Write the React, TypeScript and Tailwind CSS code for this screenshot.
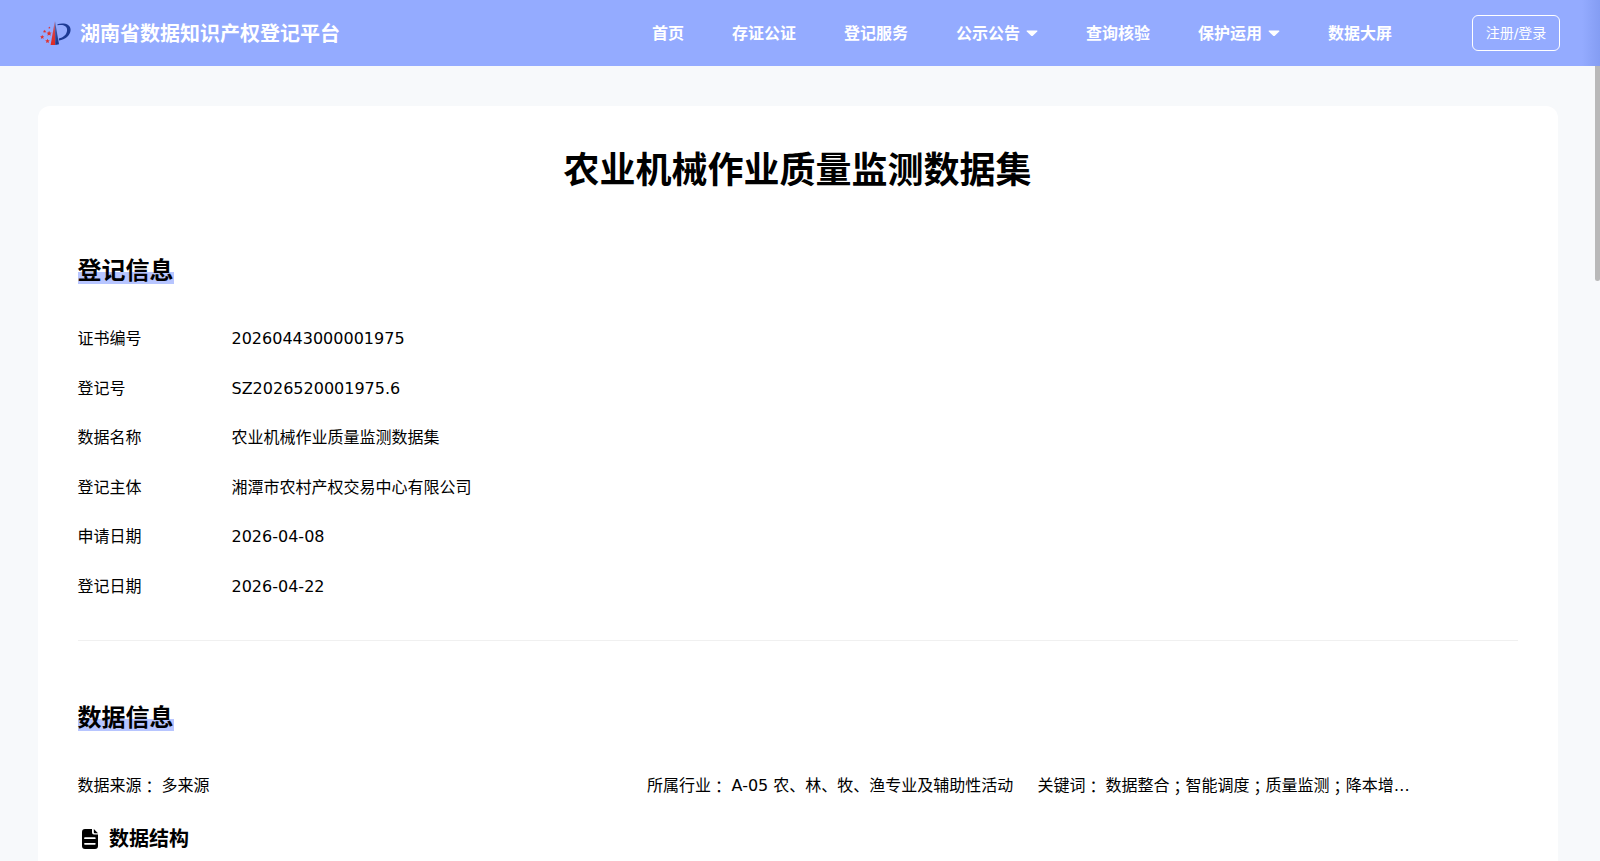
import React from "react";

const nav = [
  { label: "首页" },
  { label: "存证公证" },
  { label: "登记服务" },
  { label: "公示公告", menu: true },
  { label: "查询核验" },
  { label: "保护运用", menu: true },
  { label: "数据大屏" },
];

const rows = [
  ["证书编号", "20260443000001975"],
  ["登记号", "SZ2026520001975.6"],
  ["数据名称", "农业机械作业质量监测数据集"],
  ["登记主体", "湘潭市农村产权交易中心有限公司"],
  ["申请日期", "2026-04-08"],
  ["登记日期", "2026-04-22"],
];

const keywords = ["数据整合", "智能调度", "质量监测", "降本增…"];

const star = "M0-2.4L.7-.8 2.4-.7 1.1.4 1.5 2.1 0 1.2-1.5 2.1-1.1.4-2.4-.7-.7-.8Z";

function Logo() {
  return (
    <svg className="block h-[24px] w-[31px] shrink-0" viewBox="0 0 31 24">
      <defs>
        <linearGradient id="tower" x1="0" y1="0" x2="0" y2="1">
          <stop offset="0" stopColor="#a5708f" />
          <stop offset="0.55" stopColor="#d93a3c" />
          <stop offset="1" stopColor="#e02a20" />
        </linearGradient>
        <linearGradient id="spire" x1="0" y1="0" x2="0" y2="1">
          <stop offset="0" stopColor="#5564a8" />
          <stop offset="1" stopColor="#16368c" />
        </linearGradient>
      </defs>
      <path d="M14.8 0L15.3 23.9H10.6Z" fill="url(#tower)" />
      <path d="M15 .2L19 23.2 15.3 23.9Z" fill="url(#spire)" />
      <path
        d="M17.4 3.2C23 1.4 30.8 2.6 30.6 9C30.4 14.6 25.2 18.6 19 19.4L18.8 17.6C23.4 16.6 27 13.4 27.1 9C27.2 4.4 22.4 3.2 17.6 4.3Z"
        fill="#1d3a94"
      />
      <g fill="#e0302c">
        <path d={star} transform="translate(9.1 12.4) scale(1.1)" />
        <path d={star} transform="translate(7.5 20) scale(.95)" />
        <path d={star} transform="translate(2.2 16) scale(.9)" />
        <path d={star} transform="translate(4.6 10.4) scale(.7)" />
        <path d={star} transform="translate(9.4 6.6) scale(.5)" />
      </g>
    </svg>
  );
}

function Caret() {
  return (
    <svg className="ml-[6px] h-[7px] w-[12px]" viewBox="0 0 12 7">
      <path d="M1.1.5H10.9Q12 .6 11.2 1.5L7.1 5.6Q6 6.6 4.9 5.6L.8 1.5Q0 .6 1.1.5Z" fill="#fff" />
    </svg>
  );
}

function Wide({ children }: { children: string }) {
  return <span className="font-['Noto_Sans_CJK_TC',sans-serif]">{children}</span>;
}

function SectionTitle({ children }: { children: string }) {
  return (
    <h2 className="flex h-[38px]">
      <span className="bg-[linear-gradient(#b7c5ff,#b7c5ff)] bg-[length:100%_12px] bg-[position:0_21px] bg-no-repeat text-2xl font-bold leading-[40px]">
        {children}
      </span>
    </h2>
  );
}

export default function App() {
  return (
    <div className="flex h-[861px] flex-col overflow-hidden bg-[#f7f9fb] font-['DejaVu_Sans','Noto_Sans_CJK_SC',sans-serif] text-black">
      <header className="flex h-[66px] shrink-0 items-center bg-[linear-gradient(to_right,#94abff_0,#94abff_1582px,#849df3_1600px)] pl-10 pr-10 text-white">
        <Logo />
        <span className="ml-[9px] w-[260px] whitespace-nowrap pt-px text-[20px] font-bold leading-[28px]">
          湖南省数据知识产权登记平台
        </span>
        <nav className="ml-auto mr-20 flex items-center gap-12 pt-px text-base font-bold">
          {nav.map((item) => (
            <a key={item.label} className="flex items-center whitespace-nowrap">
              {item.label}
              {item.menu && <Caret />}
            </a>
          ))}
        </nav>
        <button className="mb-px h-[36px] w-[88px] rounded-[6px] border border-white text-sm">注册/登录</button>
      </header>

      <div className="flex min-h-0 flex-1">
        <main className="min-h-0 flex-1 overflow-hidden pl-[37.5px] pr-[37.5px] pt-10">
          <div className="h-[900px] rounded-xl bg-white px-10 pt-[41px]">
            <h1 className="text-center text-4xl font-bold leading-[48px]">农业机械作业质量监测数据集</h1>

            <section className="mt-[56px]">
              <SectionTitle>登记信息</SectionTitle>
              <dl className="mt-[37px] flex flex-col gap-6 leading-[25.6px]">
                {rows.map(([label, value]) => (
                  <div key={label} className="flex">
                    <dt className="w-[154px]">{label}</dt>
                    <dd>{value}</dd>
                  </div>
                ))}
              </dl>
            </section>

            <hr className="mt-10 border-[#f0f0f0]" />

            <section className="mt-[57px]">
              <SectionTitle>数据信息</SectionTitle>
              <div className="mt-[37px] flex h-[26px] whitespace-nowrap leading-[26px]">
                <div className="flex w-[569.5px]">
                  数据来源<Wide>：</Wide>
                  <span className="ml-[4px]">多来源</span>
                </div>
                <div className="flex w-[390.5px]">
                  所属行业<Wide>：</Wide>
                  <span className="ml-[4.5px]">A-05 农、林、牧、渔专业及辅助性活动</span>
                </div>
                <div className="flex">
                  关键词<Wide>：</Wide>
                  <span className="ml-[4px] flex">
                    {keywords.map((word, i) => (
                      <React.Fragment key={word}>
                        {i > 0 && <Wide>；</Wide>}
                        <span>{word}</span>
                      </React.Fragment>
                    ))}
                  </span>
                </div>
              </div>
              <h3 className="mt-[24.5px] flex items-center pl-[4px] text-xl font-bold leading-[32px]">
                <svg className="h-5 w-4" viewBox="0 0 16 20">
                  <path
                    d="M3 0H10V3.5Q10 5.5 12 5.5H16V17Q16 20 13 20H3Q0 20 0 17V3Q0 0 3 0Z"
                    fill="#000"
                  />
                  <path d="M11.8 0L16 4.2H12.8Q11.8 4.2 11.8 3.2Z" fill="#000" />
                  <path d="M3 9.2H12.8M3 14.8H12.8" stroke="#fff" strokeWidth="1.8" strokeLinecap="round" />
                </svg>
                <span className="ml-[11.5px]">数据结构</span>
              </h3>
            </section>
          </div>
        </main>
        <div className="w-[5px] shrink-0">
          <div className="h-[215px] rounded-b-[3px] bg-[#b9b9b9]" />
        </div>
      </div>
    </div>
  );
}
